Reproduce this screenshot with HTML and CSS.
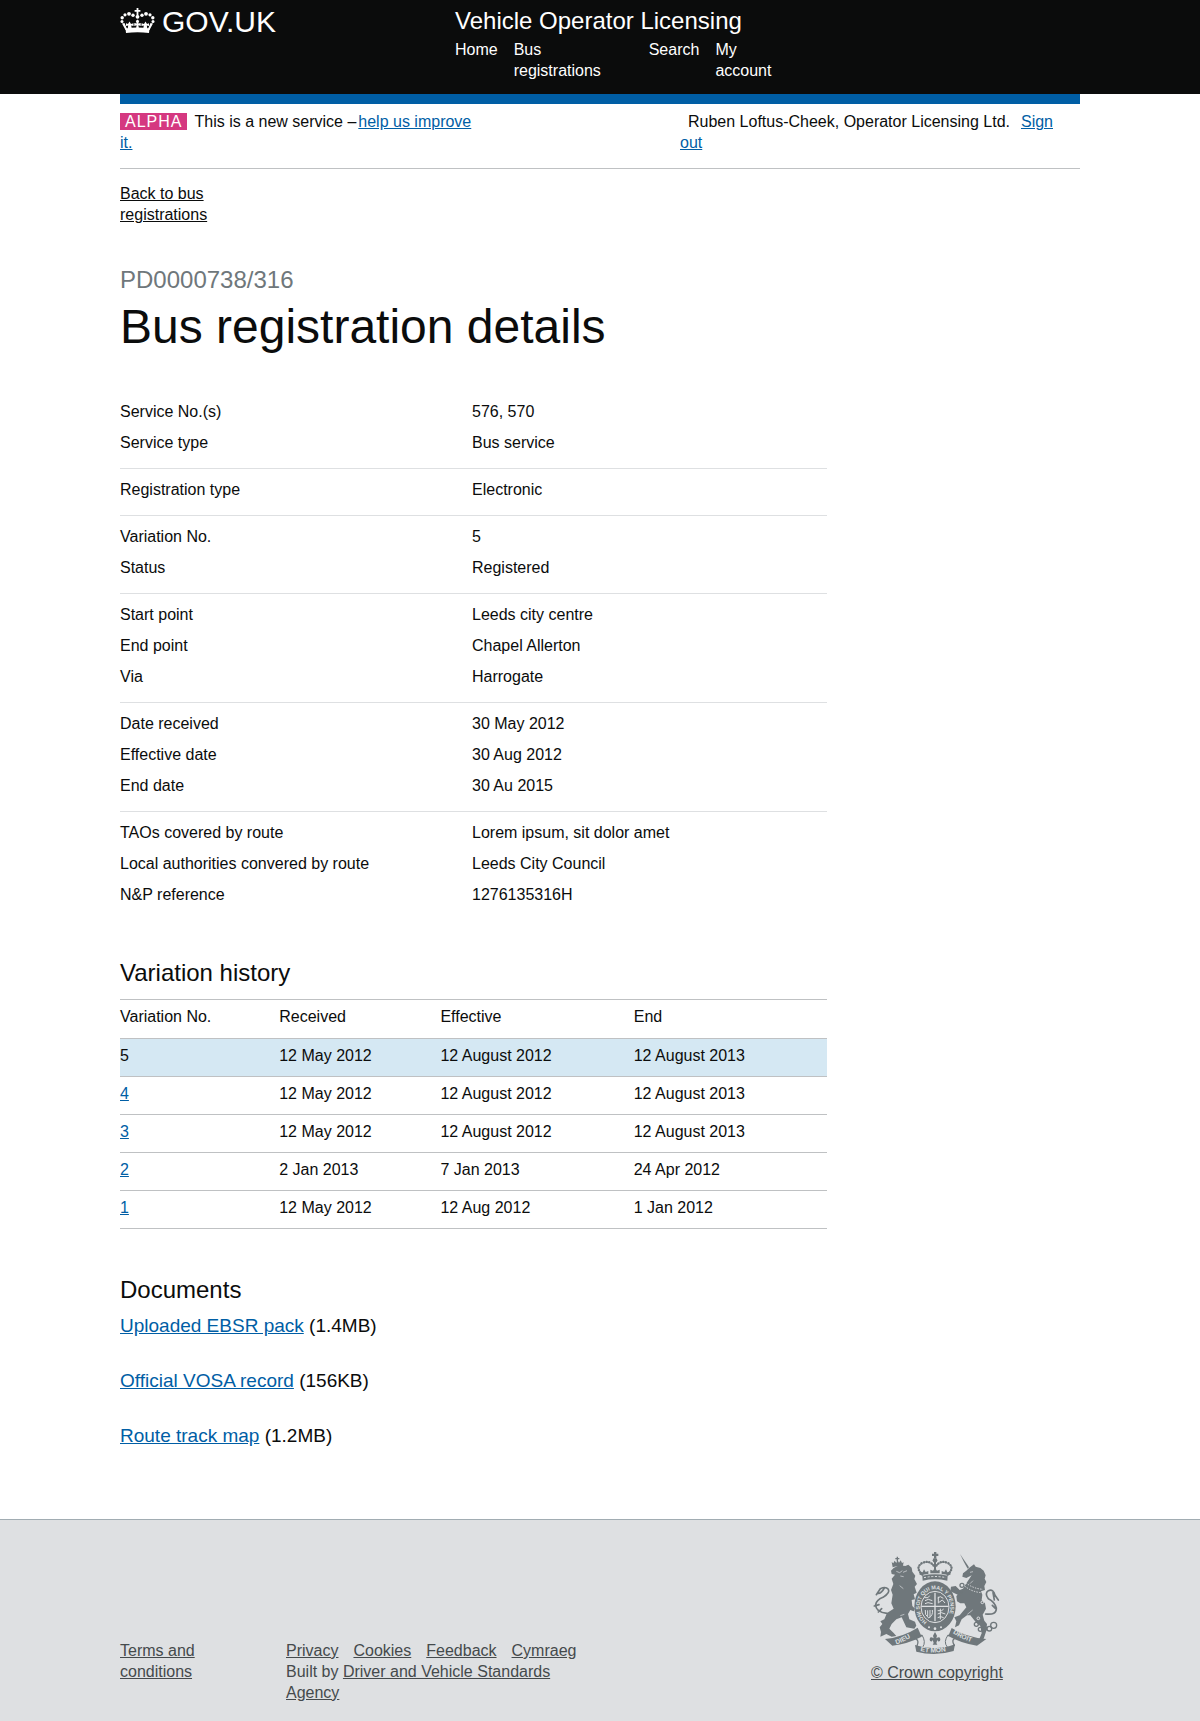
FILE: index.html
```
<!DOCTYPE html>
<html lang="en">
<head>
<meta charset="utf-8">
<title>Bus registration details</title>
<meta name="viewport" content="width=device-width, initial-scale=1">
<link rel="stylesheet" href="styles.css">
</head>
<body>
<header class="header">
  <div class="wrap header-inner">
    <a class="logo" href="#">
      <svg class="crown" viewBox="0 0 35 26" aria-hidden="true">
        <g fill="#fff">
          <path d="M5.500 20.500Q17.500 18.500 29.500 20.500L29 25Q17.500 23.500 6 25Z"/>
          <path d="M2 15.500L4.500 15L7.500 22H5.500ZM33 15.500L30.500 15L27.500 22H29.500Z"/>
          <path d="M9.500 13.500l1.500 2.500l2.500-.8v2.800l-2.300-.6l.6 3.600h-4.200l.6-3.600l-2.200.6v-2.800l2 .8zM25.500 13.500l-1.500 2.500l-2.500-.8v2.800l2.300-.6l-.6 3.600h4.200l-.6-3.600l2.200.6v-2.800l-2 .8z"/>
          <path d="M17.500 11.500l1.700 1.500l-1 2.500l2.500-.5v3l-2.300-.7l.6 3.700h-3l.6-3.700l-2.300.7v-3l2.500.5l-1-2.500z"/>
          <path d="M16.600 0h1.800v2h2v1.800h-2v4h-1.800v-4h-2V2h2z"/>
          <circle cx="2" cy="13.500" r="1.500"/><circle cx="2.200" cy="9.800" r="1.700"/><circle cx="5" cy="6.800" r="1.600"/><circle cx="9" cy="5.800" r="1.900"/><circle cx="13" cy="7.300" r="1.700"/>
          <circle cx="33" cy="13.500" r="1.500"/><circle cx="32.800" cy="9.800" r="1.700"/><circle cx="30" cy="6.800" r="1.600"/><circle cx="26" cy="5.800" r="1.900"/><circle cx="22" cy="7.300" r="1.700"/>
          <circle cx="17.500" cy="8.800" r="1.900"/>
        </g>
      </svg>
      <span>GOV.UK</span>
    </a>
    <div class="proposition">
      <a class="service-name" href="#">Vehicle Operator Licensing</a>
      <nav aria-label="Main">
        <ul class="nav">
          <li><a href="#">Home</a></li>
          <li class="nav-wide"><a href="#">Bus<br>registrations</a></li>
          <li><a href="#">Search</a></li>
          <li><a href="#">My<br>account</a></li>
        </ul>
      </nav>
    </div>
  </div>
</header>

<div class="page">
<div class="wrap">
  <div class="phase">
    <p class="phase-message"><strong class="tag">ALPHA</strong>This is a new service –<a class="improve" href="#">help us improve it.</a></p>
    <p class="account"><span class="user">Ruben Loftus-Cheek, Operator Licensing Ltd.</span><a href="#">Sign out</a></p>
  </div>

  <main>
    <a class="back" href="#">Back to bus registrations</a>
    <p class="reference">PD0000738/316</p>
    <h1>Bus registration details</h1>

    <div class="details">
      <dl class="group">
        <dt>Service No.(s)</dt><dd>576, 570</dd>
        <dt>Service type</dt><dd>Bus service</dd>
      </dl>
      <dl class="group">
        <dt>Registration type</dt><dd>Electronic</dd>
      </dl>
      <dl class="group">
        <dt>Variation No.</dt><dd>5</dd>
        <dt>Status</dt><dd>Registered</dd>
      </dl>
      <dl class="group">
        <dt>Start point</dt><dd>Leeds city centre</dd>
        <dt>End point</dt><dd>Chapel Allerton</dd>
        <dt>Via</dt><dd>Harrogate</dd>
      </dl>
      <dl class="group">
        <dt>Date received</dt><dd>30 May 2012</dd>
        <dt>Effective date</dt><dd>30 Aug 2012</dd>
        <dt>End date</dt><dd>30 Au 2015</dd>
      </dl>
      <dl class="group">
        <dt>TAOs covered by route</dt><dd>Lorem ipsum, sit dolor amet</dd>
        <dt>Local authorities convered by route</dt><dd>Leeds City Council</dd>
        <dt>N&amp;P reference</dt><dd>1276135316H</dd>
      </dl>
    </div>

    <h2 class="history-title" id="history">Variation history</h2>
    <table class="history" aria-labelledby="history">
      <colgroup><col class="col-no"><col class="col-received"><col class="col-date"><col class="col-date"></colgroup>
      <thead>
        <tr><th scope="col">Variation No.</th><th scope="col">Received</th><th scope="col">Effective</th><th scope="col">End</th></tr>
      </thead>
      <tbody>
        <tr class="current"><td>5</td><td>12 May 2012</td><td>12 August 2012</td><td>12 August 2013</td></tr>
        <tr><td><a href="#">4</a></td><td>12 May 2012</td><td>12 August 2012</td><td>12 August 2013</td></tr>
        <tr><td><a href="#">3</a></td><td>12 May 2012</td><td>12 August 2012</td><td>12 August 2013</td></tr>
        <tr><td><a href="#">2</a></td><td>2 Jan 2013</td><td>7 Jan 2013</td><td>24 Apr 2012</td></tr>
        <tr><td><a href="#">1</a></td><td>12 May 2012</td><td>12 Aug 2012</td><td>1 Jan 2012</td></tr>
      </tbody>
    </table>

    <h2 class="documents-title">Documents</h2>
    <ul class="documents">
      <li><a href="#">Uploaded EBSR pack</a> (1.4MB)</li>
      <li><a href="#">Official VOSA record</a> (156KB)</li>
      <li><a href="#">Route track map</a> (1.2MB)</li>
    </ul>
  </main>
</div>
</div>

<footer class="footer">
  <div class="wrap footer-inner">
    <a class="terms" href="#">Terms and conditions</a>
    <div class="meta">
      <ul class="meta-links">
        <li><a href="#">Privacy</a></li>
        <li><a href="#">Cookies</a></li>
        <li><a href="#">Feedback</a></li>
        <li><a href="#">Cymraeg</a></li>
      </ul>
      <p>Built by <a href="#">Driver and Vehicle Standards Agency</a></p>
    </div>
    <a class="copyright" href="#">
      <svg class="crest" viewBox="36 30 390 318" aria-hidden="true">
        <defs>
          <path id="garter" d="M204 246A46 53 0 1 1 252 246"/>
          <path id="dieu" d="M112 313Q140 305 176 278"/>
          <path id="etmon" d="M184 333Q228 344 280 329"/>
          <path id="droit" d="M281 279Q316 304 362 312"/>
        </defs>
        <g fill="#6f777b">
          <!-- royal crown -->
          <path d="M225 36h7v5h6v7h-6v6h-7v-6h-6v-7h6z"/>
          <circle cx="228" cy="61" r="7"/>
          <path d="M190 107Q228 99 266 107L265 122Q228 114 191 122Z"/>
          <path d="M195 88l5 8l8-3v9l-26 3v-10l9 2zM228 83l6 9l8-3v11h-28V89l8 3zM261 88l-5 8l-8-3v9l26 3v-10l-9 2z"/>
          <path d="M225 64h6v24h-6z"/>
          <!-- lion's crown and body -->
          <path d="M98 66l5 4l4-8l5 7l3-10l5 9l5-7l4 8l5-2l-3 14Q115 76 101 82Z"/>
          <path d="M113 50h4v4h4v4h-4v5h-4v-5h-4v-4h4z"/>
          <path d="M104 84Q120 74 139 78L148 74L158 83L160 95L169 107L166 117L174 132L167 140L173 158L164 163L168 178L158 180L160 198L168 206L164 214L154 210L147 222L151 238L168 245L172 257L166 266L142 262L128 232L112 238L98 252L91 266L104 279L112 288L98 290L82 282L64 290L66 276L62 262L70 252L64 244L76 238L84 219L104 206L97 190L101 164L96 150L103 132L98 116L108 104L98 102L96 92Z"/>
          <!-- unicorn -->
          <path d="M303 42L330 82L326 86L316 68Z"/>
          <path d="M330 84L345 73L350 80L364 84L374 92L380 106L377 116L382 126L376 138L378 150L366 154L370 164L368 180L378 190L381 206L371 224L376 242L384 252L382 272L374 296L360 299L368 280L364 258L350 246L334 226L324 226L308 238L300 256L288 262L292 244L286 232L302 226L322 202L316 190L304 190L294 184L292 168L296 164L274 154L276 140L290 138L302 150L312 146L322 130L338 106L322 114L310 110L312 100L322 92Z"/>
          <!-- garter -->
          <ellipse cx="228" cy="199" rx="62" ry="75"/>
          <!-- motto ribbon -->
          <path d="M78 297Q130 292 176 263L188 290Q145 312 100 317Z"/>
          <path d="M278 264Q320 292 382 297L354 317Q306 310 268 288Z"/>
          <path d="M168 315Q228 335 288 313L284 333Q228 350 172 335Z"/>
          <path d="M228 276l6 11l-2 8q12-8 12 4q0 6-7 5l-2-4l-3 9l3 5h-14l3-5l-3-9l-2 4q-7 1-7-5q0-12 12-4l-2-8z"/>
        </g>
        <g fill="none" stroke="#6f777b" stroke-width="5" stroke-linecap="round">
          <path stroke-dasharray="1 7" stroke-width="7" d="M190 104Q168 83 188 70Q212 58 226 80M266 104Q288 83 268 70Q244 58 230 80"/>
          <path d="M84 220Q50 216 50 194Q52 180 72 172Q94 158 88 148Q80 138 64 146L52 164M56 160Q66 162 76 144M46 198L60 194M58 216L68 206"/>
          <path d="M380 222Q413 226 412 204Q406 184 388 176Q376 160 388 152Q404 146 408 166L418 180M402 158L406 180M400 196L412 208"/>
          <path stroke-width="4" d="M188 287Q170 284 168 295Q182 300 174 318M268 287Q286 284 288 295Q276 300 286 316"/>
          <path stroke-width="3" d="M189 285Q202 306 192 320M267 285Q252 306 264 320"/>
          <g stroke-width="4">
            <circle cx="352" cy="253" r="6"/><circle cx="364" cy="268" r="6"/><circle cx="378" cy="266" r="5"/><circle cx="391" cy="266" r="7"/><circle cx="404" cy="256" r="9"/><circle cx="309" cy="136" r="6"/><circle cx="304" cy="160" r="5"/>
          </g>
        </g>
        <g fill="none" stroke="#dee0e2" stroke-width="3">
          <ellipse cx="228" cy="201" rx="42" ry="47"/>
          <path stroke-width="4" d="M228 158v86M187 199h82"/>
          <path d="M196 173h11l5-6M198 182l10-4l12 4M198 191l9-3l14 3M236 174l8-4l9 5M240 187l10-7l8 9M238 170v20M236 212h12l6-5M236 222l11-4l12 4M236 233l9-3l9 3M244 206v32M199 210q-4 14 10 24q14-8 11-24M206 211v18M213 210v22"/>
          <path d="M195 113q33-7 66 0" stroke-dasharray="6 5"/>
          <path d="M320 128Q342 146 372 148M317 138Q338 156 368 158" stroke-dasharray="4 4"/>
          <path d="M112 94l10 4l8-6M132 97l12-5M124 108l10 2M122 137l11 9M136 223l-12 4M333 97l9-2M342 122l-9 9M341 210l-16 13" stroke-width="2"/>
          <circle cx="370" cy="187" r="4"/><circle cx="358" cy="235" r="4"/>
        </g>
        <g fill="#dee0e2">
          <circle cx="210" cy="262" r="3"/><circle cx="228" cy="266" r="4"/><circle cx="246" cy="262" r="3"/>
        </g>
        <g class="motto">
          <text class="garter-text"><textPath href="#garter">HONI SOIT QUI MAL Y PENSE</textPath></text>
          <text><textPath href="#dieu">DIEU</textPath></text>
          <text><textPath href="#etmon">ET MON</textPath></text>
          <text><textPath href="#droit">DROIT</textPath></text>
        </g>
      </svg>
      <span>© Crown copyright</span>
    </a>
  </div>
</footer>
</body>
</html>
```

FILE: styles.css
```
* { box-sizing: border-box; }
body {
  margin: 0;
  background: #dee0e2;
  color: #0b0c0c;
  font: 16px/21px "Liberation Sans", Arial, sans-serif;
}
h1, h2, p, ul, dl, dd { margin: 0; padding: 0; font-weight: 400; }
ul { list-style: none; }
a { color: #005ea5; }
.wrap { max-width: 960px; margin: 0 auto; }
.page { background: #fff; }

.header { background: #0b0c0c; }
.header a { color: #fff; text-decoration: none; }
.header-inner { display: flex; min-height: 94px; padding: 8px 0 13px; }
.logo { display: flex; gap: 7px; width: 335px; flex: none; font-size: 30px; line-height: 28px; }
.crown { width: 35px; height: 26px; }
.service-name { display: block; font-size: 24px; line-height: 26px; margin-bottom: 5px; }
.nav { display: flex; gap: 16px; }
.nav-wide { width: 119px; }

.phase {
  display: flex;
  justify-content: space-between;
  border-top: 10px solid #005ea5;
  border-bottom: 1px solid #bfc1c3;
  padding: 7px 0 15px;
}
.phase-message { width: 360px; }
.account { width: 400px; padding-right: 16px; }
.tag { background: #d53880; color: #fff; font-weight: 400; letter-spacing: 1px; padding: 0 5px; margin-right: 7px; }
.improve { margin-left: 2px; }
.user { margin: 0 11px 0 8px; }

main { padding-bottom: 71px; }
.back { display: block; width: 120px; margin: 14px 0 40px; color: #0b0c0c; }
.reference { font-size: 24px; line-height: 30px; color: #6f777b; }
h1 { font-size: 48px; line-height: 50px; margin: 7px 0 39px; }
.details { max-width: 707px; }
.group {
  display: grid;
  grid-template-columns: 352px 1fr;
  row-gap: 10px;
  padding: 10px 0 15px;
  border-bottom: 1px solid #dee0e2;
}
.group:last-child { border-bottom: 0; }
h2 { font-size: 24px; line-height: 30px; }
.history-title { margin: 38px 0 11px; }
.history {
  width: 100%;
  max-width: 707px;
  table-layout: fixed;
  border-collapse: collapse;
  border-top: 1px solid #bfc1c3;
}
.history th, .history td {
  padding: 6px 0 10px;
  border-bottom: 1px solid #bfc1c3;
  font-weight: 400;
  text-align: left;
}
.history th { padding-bottom: 11px; }
.col-no { width: 159px; }
.col-received { width: 161px; }
.col-date { width: 193px; }
.current { background: #d5e8f3; }

.documents-title { margin: 46px 0 8px; }
.documents { display: grid; gap: 30px; font-size: 19px; line-height: 25px; }

.footer { border-top: 1px solid #a1acb2; padding: 30px 0 17px; color: #454a4c; }
.footer a { color: #454a4c; }
.footer-inner { display: flex; align-items: flex-start; }
.terms { width: 90px; margin: 90px 76px 0 0; }
.meta { width: 300px; margin-top: 90px; }
.meta-links { display: flex; gap: 15px; }
.copyright { width: 132px; margin: 0 77px 0 auto; white-space: nowrap; }
.crest { display: block; width: 130px; height: 106px; margin-bottom: 6px; }
.motto { fill: #dee0e2; font-size: 20px; font-weight: 700; }
.garter-text { font-size: 16px; }
```
